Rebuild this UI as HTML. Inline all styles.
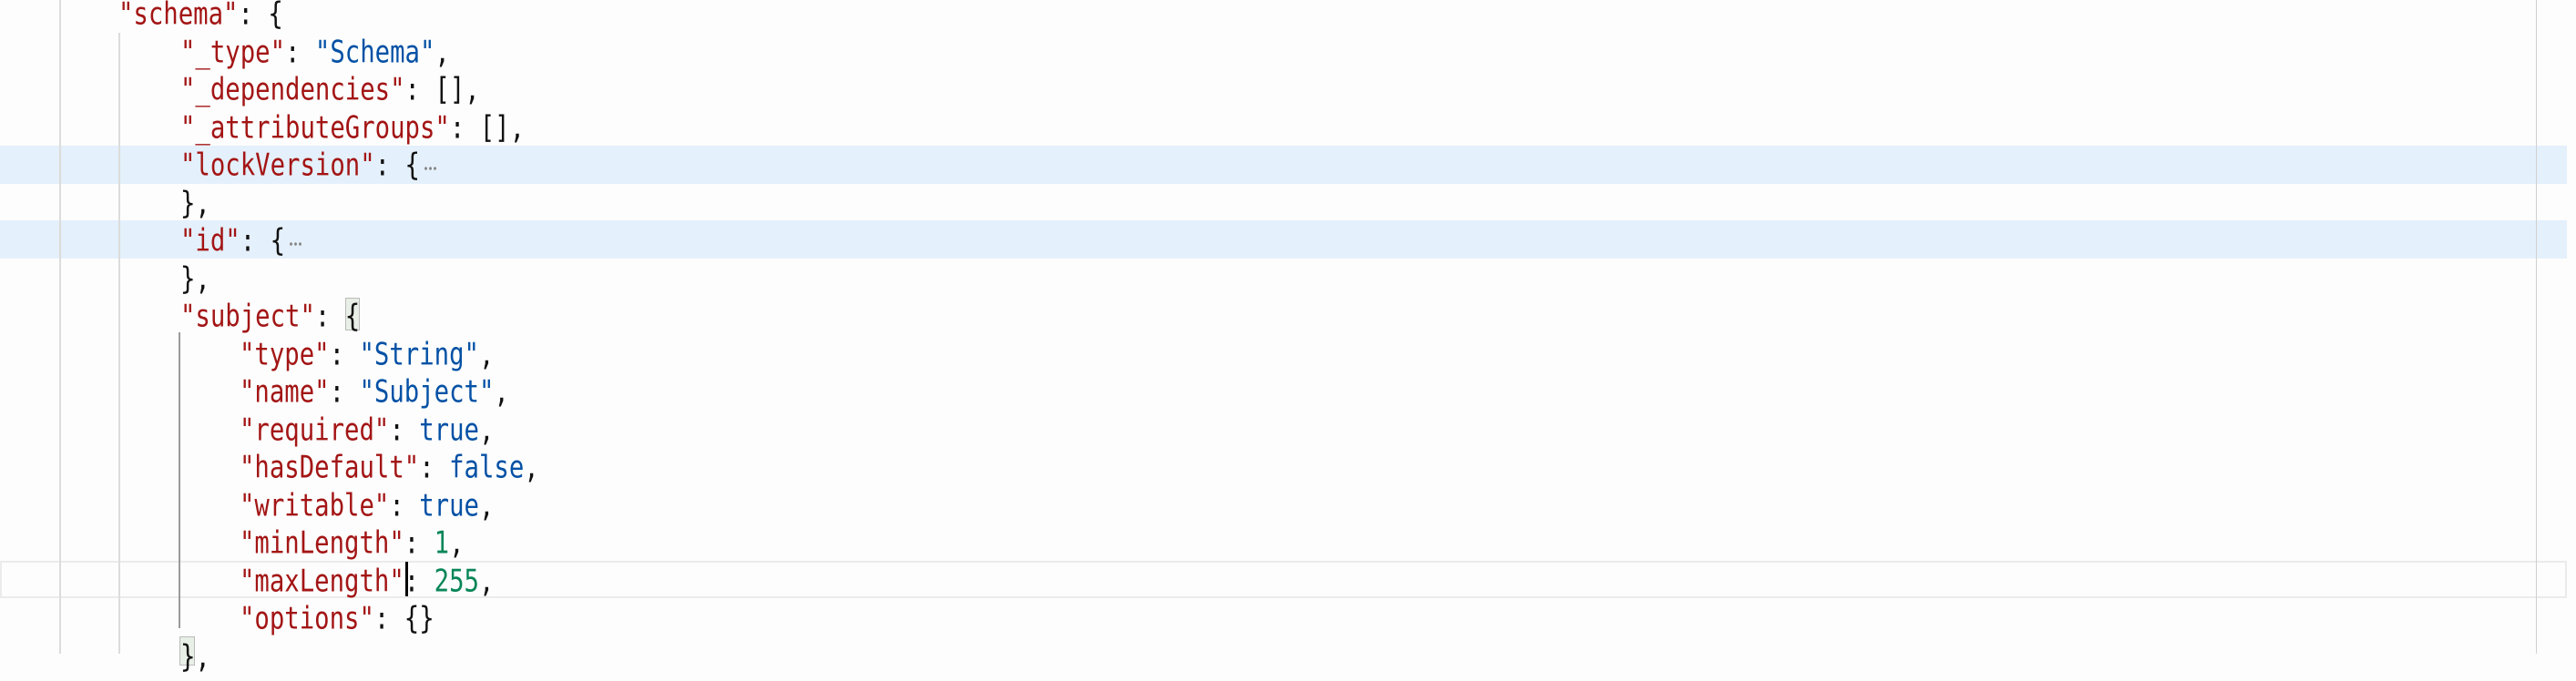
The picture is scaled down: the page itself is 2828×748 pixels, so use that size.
<!DOCTYPE html>
<html><head><style>
html,body{margin:0;padding:0;width:2828px;height:718px;overflow:hidden;background:#fdfdfd;}
.ln{position:absolute;left:0;width:2600px;height:41.5px;line-height:41.5px;font-family:"DejaVu Sans Mono","Liberation Mono",monospace;font-size:27.3px;white-space:pre;color:#111;transform:scaleY(1.25);transform-origin:0 55%;}
.hl{position:absolute;left:0;width:2818px;background:#e4f0fb;}
.k{color:#a31515}.s{color:#0451a5}.n{color:#098658}.b{color:#0451a5}
.e{display:inline-block;width:16px;height:4px;margin-left:4px;vertical-align:4px;background:radial-gradient(circle,#888 1.3px,transparent 1.6px) 0 0/5px 4px repeat-x;}
.g{position:absolute;width:2px;background:#dcdcdc;}
.box{position:absolute;border:1px solid #bbb;background:#e8efe6;}
</style></head><body>
<div class="hl" style="top:160px;height:42px"></div>
<div class="hl" style="top:242px;height:42px"></div>
<div style="position:absolute;left:0;top:616px;width:2814px;height:37px;border:2px solid #ebebeb;"></div>
<div class="g" style="left:65px;top:0;height:718px"></div>
<div class="g" style="left:130px;top:36px;height:682px"></div>
<div class="g" style="left:196px;top:365px;height:325px;background:#9a9a9a"></div>
<div class="g" style="left:2784px;top:0;height:718px;width:1px;background:#d0d0d0"></div>
<div class="box" style="left:379px;top:327px;width:14px;height:34px"></div>
<div class="box" style="left:197px;top:699px;width:15px;height:30px"></div>
<div style="position:absolute;left:445px;top:617px;width:3px;height:38px;background:#000"></div>
<div style="position:absolute;left:0;top:-4px">
<div class="ln" style="top:0px;left:130px"><span class="k">"schema"</span>: {</div>
<div class="ln" style="top:41.5px;left:198px"><span class="k">"_type"</span>: <span class="s">"Schema"</span>,</div>
<div class="ln" style="top:83px;left:198px"><span class="k">"_dependencies"</span>: [],</div>
<div class="ln" style="top:124.5px;left:198px"><span class="k">"_attributeGroups"</span>: [],</div>
<div class="ln" style="top:166px;left:198px"><span class="k">"lockVersion"</span>: {<span class="e"></span></div>
<div class="ln" style="top:207.5px;left:198px">},</div>
<div class="ln" style="top:249px;left:198px"><span class="k">"id"</span>: {<span class="e"></span></div>
<div class="ln" style="top:290.5px;left:198px">},</div>
<div class="ln" style="top:332px;left:198px"><span class="k">"subject"</span>: {</div>
<div class="ln" style="top:373.5px;left:263px"><span class="k">"type"</span>: <span class="s">"String"</span>,</div>
<div class="ln" style="top:415px;left:263px"><span class="k">"name"</span>: <span class="s">"Subject"</span>,</div>
<div class="ln" style="top:456.5px;left:263px"><span class="k">"required"</span>: <span class="b">true</span>,</div>
<div class="ln" style="top:498px;left:263px"><span class="k">"hasDefault"</span>: <span class="b">false</span>,</div>
<div class="ln" style="top:539.5px;left:263px"><span class="k">"writable"</span>: <span class="b">true</span>,</div>
<div class="ln" style="top:581px;left:263px"><span class="k">"minLength"</span>: <span class="n">1</span>,</div>
<div class="ln" style="top:622.5px;left:263px"><span class="k">"maxLength"</span>: <span class="n">255</span>,</div>
<div class="ln" style="top:664px;left:263px"><span class="k">"options"</span>: {}</div>
<div class="ln" style="top:705.5px;left:198px">},</div>
</div>
</body></html>
